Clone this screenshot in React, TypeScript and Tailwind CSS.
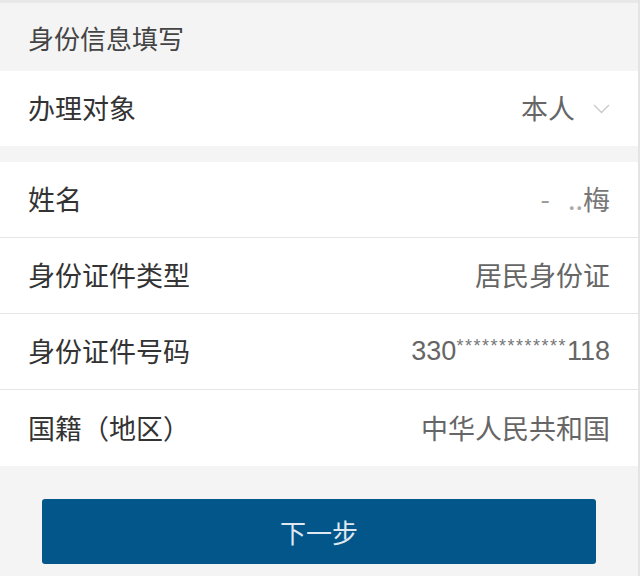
import React from "react";

const font = { fontFamily: '"Noto Sans CJK SC", "Noto Sans", sans-serif' };

function Row({ label, value, last }: { label: string; value: React.ReactNode; last?: boolean }) {
  return (
    <div className={`flex h-[76px] items-center justify-between pl-7 pr-[28px] ${last ? "" : "border-b border-[#e6e6e6]"}`}>
      <span className="text-[27px] text-[#333333]">{label}</span>
      <span className="text-[27px] text-[#666666]">{value}</span>
    </div>
  );
}

export default function App() {
  return (
    <div className="flex h-[576px] w-[640px] bg-[#f4f4f4]" style={font}>
      <div className="flex w-[638px] flex-col">
        <div className="h-[3px] bg-[#e8e8e8]" />
        <div className="flex h-[68px] items-center pl-7 text-[26px] text-[#444444]">身份信息填写</div>
        <div className="flex h-[75px] items-center justify-between bg-white pl-7 pr-[28px]">
          <span className="text-[27px] text-[#333333]">办理对象</span>
          <span className="flex items-center gap-[18px] text-[27px] text-[#666666]">
            本人
            <svg width="17" height="10" viewBox="0 0 17 10" fill="none">
              <path d="M1 1l7.5 7.5L16 1" stroke="#c8c8c8" strokeWidth="1.3" />
            </svg>
          </span>
        </div>
        <div className="h-[16px]" />
        <div className="bg-white">
          <Row
            label="姓名"
            value={
              <span className="text-[#777777]">
                <span className="text-[#999999]">-</span>
                <span className="ml-[18px] text-[#aaaaaa]">..</span>梅
              </span>
            }
          />
          <Row label="身份证件类型" value="居民身份证" />
          <Row
            label="身份证件号码"
            value={
              <span className="flex items-center" style={{ fontFamily: '"Liberation Sans", "Noto Sans CJK SC", sans-serif' }}>
                330
                <span className="relative -top-[5px] text-[18px] tracking-[1.5px] text-[#777777]">*************</span>
                118
              </span>
            }
          />
          <Row label="国籍（地区）" value="中华人民共和国" last />
        </div>
        <div className="flex justify-center pt-[33px]">
          <button className="flex h-[65px] w-[554px] items-center justify-center rounded-[3px] bg-[#03568a] text-[26px] text-[#dfe8f0]">
            下一步
          </button>
        </div>
      </div>
      <div className="w-[2px] bg-[#e4e4e4]" />
    </div>
  );
}
